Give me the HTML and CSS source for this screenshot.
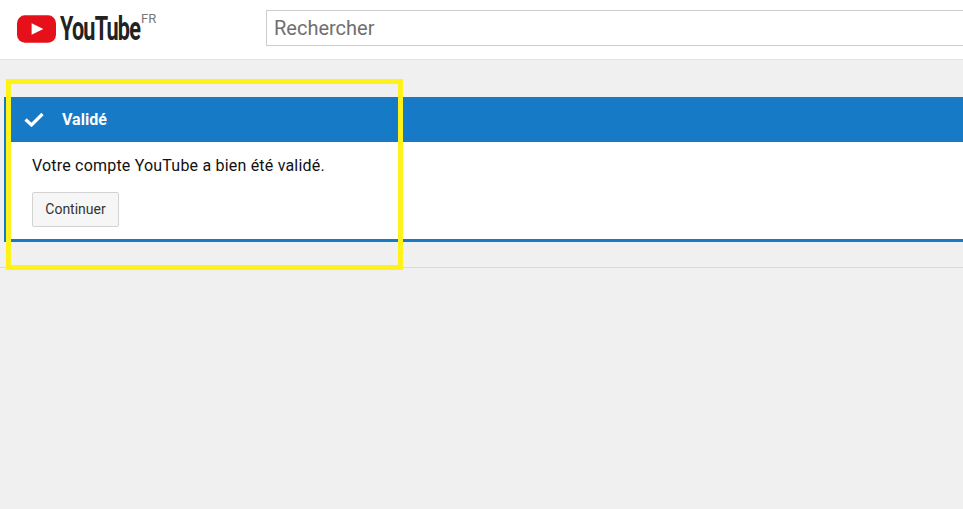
FILE: index.html
```html
<!DOCTYPE html>
<html lang="fr">
<head>
<meta charset="utf-8">
<title>YouTube</title>
<link rel="stylesheet" href="styles.css">
</head>
<body>
<header class="masthead">
  <a class="logo">
    <svg class="logo-icon" width="40" height="28" viewBox="0 0 40 28"><rect x="0" y="0" width="40" height="28" rx="8" ry="8" fill="#e6101a"/><path d="M15 8 L27 14 L15 20 Z" fill="#fff"/></svg>
    <span class="logo-word">YouTube</span>
    <span class="logo-country">FR</span>
  </a>
  <div class="search">Rechercher</div>
</header>
<main class="content">
  <section class="alert">
    <div class="alert-head">
      <svg class="check" width="20" height="15" viewBox="0 0 20 15"><path d="M1.5 7.5 L7.5 13 L18.5 2" fill="none" stroke="#fff" stroke-width="3.2"/></svg>
      <span class="alert-title">Validé</span>
    </div>
    <div class="alert-body">
      <p class="alert-text">Votre compte YouTube a bien été validé.</p>
      <button class="btn">Continuer</button>
    </div>
  </section>
  <div class="rule"></div>
</main>
<div class="highlight"></div>
</body>
</html>
```
FILE: styles.css
```css
* { box-sizing: border-box; }
html, body { margin: 0; height: 100%; }
body { background: #f0f0f0; font-family: Roboto, "Liberation Sans", sans-serif; overflow: hidden; position: relative; }
.masthead { height: 60px; background: #fff; border-bottom: 1px solid #e3e3e3; display: flex; align-items: flex-start; padding: 10px 0 0 17px; }
.logo { display: flex; align-items: flex-start; width: 249px; flex: none; }
.logo-icon { margin-top: 5px; flex: none; width: 39px; }
.logo-word { font-family: Roboto, sans-serif; font-weight: 700; font-size: 33px; line-height: 38px; letter-spacing: -1.2px; color: #222; margin-left: 4px; transform: scaleX(.655); transform-origin: 0 50%; width: 81px; flex: none; }
.logo-country { font-size: 13px; line-height: 14px; color: #777; margin-top: 2px; }
.search { flex: 1; height: 36px; background: #fff; border: 1px solid #ccc; border-right: none; padding-left: 7px; font-size: 20px; line-height: 34px; color: #6f6f6f; }
.content { padding: 37px 0 0 4px; }
.alert { border-left: 2px solid #167ac6; background: #fff; border-bottom: 3px solid #167ac6; }
.alert-head { height: 45px; background: #167ac6; display: flex; align-items: center; padding-left: 18px; color: #fff; }
.check { flex: none; }
.alert-title { margin-left: 18px; font-size: 16px; font-weight: 700; }
.alert-body { height: 97px; padding: 15px 0 0 26px; }
.alert-text { margin: 0 0 17px; font-size: 16px; font-weight: 400; letter-spacing: .2px; line-height: 18px; color: #111; }
.btn { display: block; width: 87px; height: 35px; padding: 0 0 2px; background: #f6f6f6; border: 1px solid #d3d3d3; border-radius: 2px; font-family: inherit; font-size: 14px; font-weight: 400; color: #333; }
.rule { height: 1px; background: #d8d8d8; margin: 25px 0 0 -4px; }
.highlight { position: absolute; left: 6px; top: 79px; width: 397px; height: 191px; border: 5px solid #fff21a; }
```
